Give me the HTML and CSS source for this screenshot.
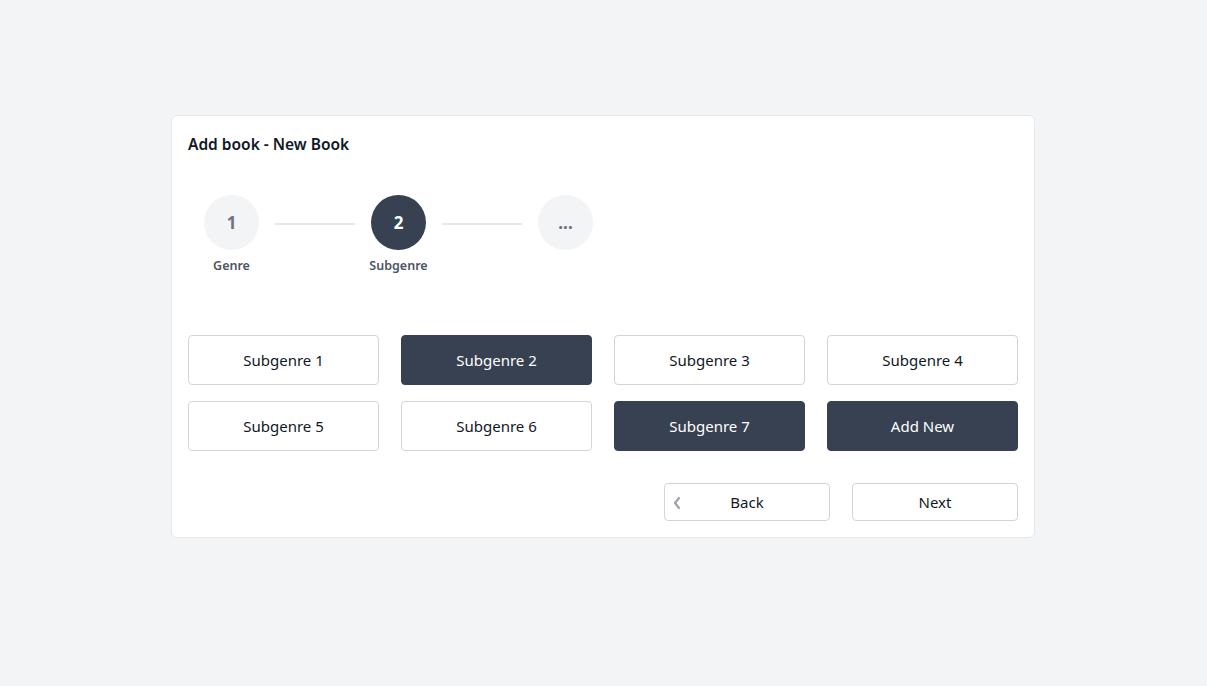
FILE: index.html
```html
<!DOCTYPE html>
<html>
<head>
<meta charset="utf-8">
<link rel="stylesheet" href="styles.css">
</head>
<body>
<div class="card">
  <h1 class="title">Add book - New Book</h1>
  <div class="steps">
    <div class="step">
      <div class="circle">1</div>
      <div class="label">Genre</div>
    </div>
    <div class="line"></div>
    <div class="step">
      <div class="circle active">2</div>
      <div class="label">Subgenre</div>
    </div>
    <div class="line"></div>
    <div class="step">
      <div class="circle">...</div>
      <div class="label"></div>
    </div>
  </div>
  <div class="grid">
    <button class="opt">Subgenre 1</button>
    <button class="opt dark">Subgenre 2</button>
    <button class="opt">Subgenre 3</button>
    <button class="opt">Subgenre 4</button>
    <button class="opt">Subgenre 5</button>
    <button class="opt">Subgenre 6</button>
    <button class="opt dark">Subgenre 7</button>
    <button class="opt dark">Add New</button>
  </div>
  <div class="nav">
    <button class="navbtn back">
      <svg class="chev" width="10" height="14" viewBox="0 0 10 14"><path d="M7 2 L3 7 L7 12" fill="none" stroke="#9ca3af" stroke-width="2.2" stroke-linecap="round" stroke-linejoin="round"/></svg>
      <span>Back</span>
    </button>
    <button class="navbtn">Next</button>
  </div>
</div>
</body>
</html>
```

FILE: styles.css
```css
* { box-sizing: border-box; }
html, body { margin: 0; padding: 0; }
body {
  background: #f3f4f6;
  font-family: "Noto Sans", "Open Sans", "Liberation Sans", sans-serif;
  color: #111827;
  padding: 115px 0 0 171px;
}
.card {
  width: 864px;
  background: #fff;
  border: 1px solid #e5e7eb;
  border-radius: 6px;
  padding: 16px;
}
.title {
  margin: 0;
  font-size: 15.5px;
  font-weight: 600;
  line-height: 24px;
  color: #111827;
}
.steps {
  display: flex;
  align-items: flex-start;
  margin-top: 39px;
  padding-left: 16px;
}
.step {
  width: 55px;
  display: flex;
  flex-direction: column;
  align-items: center;
}
.circle {
  width: 55px;
  height: 55px;
  border-radius: 50%;
  background: #f3f4f6;
  color: #6b7280;
  font-size: 17px;
  font-weight: 700;
  display: flex;
  align-items: center;
  justify-content: center;
}
.circle.active {
  background: #374151;
  color: #fff;
}
.label {
  margin-top: 7px;
  font-size: 12.5px;
  font-weight: 600;
  line-height: 18px;
  color: #4b5563;
  white-space: nowrap;
  height: 18px;
}
.line {
  width: 80px;
  height: 2px;
  background: #e5e7eb;
  margin: 28px 16px 0;
}
.grid {
  display: grid;
  grid-template-columns: repeat(4, 1fr);
  column-gap: 22px;
  row-gap: 16px;
  margin-top: 60px;
}
.opt {
  height: 50px;
  border: 1px solid #d1d5db;
  border-radius: 4px;
  background: #fff;
  font-family: inherit;
  font-size: 15px;
  color: #111827;
  cursor: pointer;
}
.opt.dark {
  background: #374151;
  border-color: #374151;
  color: #fff;
}
.nav {
  display: flex;
  justify-content: flex-end;
  gap: 22px;
  margin-top: 32px;
}
.navbtn {
  position: relative;
  width: 166px;
  height: 38px;
  border: 1px solid #d1d5db;
  border-radius: 4px;
  background: #fff;
  font-family: inherit;
  font-size: 15px;
  color: #111827;
  display: flex;
  align-items: center;
  justify-content: center;
}
.chev {
  position: absolute;
  left: 7px;
  top: 12px;
}
```
